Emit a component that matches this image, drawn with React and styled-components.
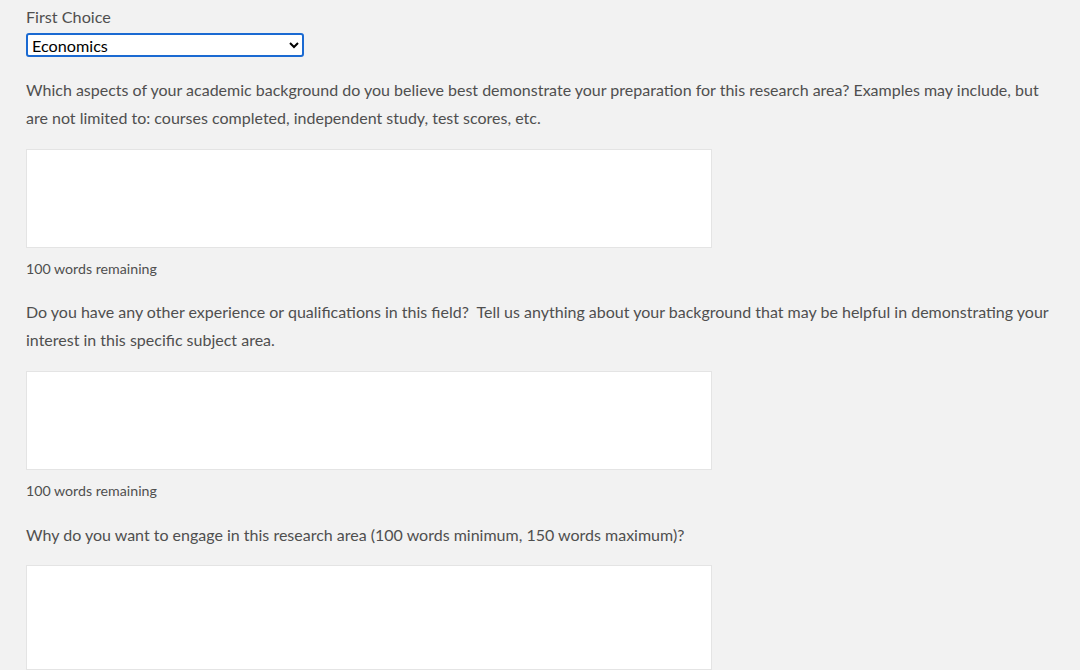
import React from "react";
import styled, { createGlobalStyle } from "styled-components";

const GlobalStyle = createGlobalStyle`
  html, body {
    margin: 0;
    padding: 0;
    background: #f2f2f2;
  }
  body {
    font-family: Lato, "Open Sans", sans-serif;
    color: #4f4f4f;
    overflow: hidden;
  }
`;

const Page = styled.div`
  padding: 7px 20px 0 26px;
  display: flex;
  flex-direction: column;
`;

const Label = styled.label`
  font-size: 16.2px;
  line-height: 20px;
  color: #4f4f4f;
`;

const Select = styled.select`
  margin-top: 6px;
  width: 278px;
  height: 24px;
  box-sizing: border-box;
  border: 2px solid #1b6ad2;
  border-radius: 3px;
  background: #fff;
  color: #000;
  font-family: Lato, "Open Sans", sans-serif;
  font-size: 16.2px;
  line-height: 20px;
  padding: 0;
  outline: none;
`;

const Question = styled.p`
  margin: ${(p) => p.$top}px 0 0;
  font-size: 16px;
  line-height: 28px;
  color: #4f4f4f;
`;

const Answer = styled.textarea`
  display: block;
  margin-top: ${(p) => p.$top}px;
  width: 686px;
  height: ${(p) => p.$height || 99}px;
  box-sizing: border-box;
  border: 1px solid #e4e4e4;
  background: #fff;
  resize: none;
  outline: none;
`;

const Counter = styled.div`
  margin-top: ${(p) => p.$top}px;
  font-size: 14.2px;
  line-height: 20px;
  color: #4f4f4f;
`;

export default function App() {
  return (
    <>
      <GlobalStyle />
      <Page>
        <Label htmlFor="first-choice">First Choice</Label>
        <Select id="first-choice" defaultValue="Economics">
          <option>Economics</option>
        </Select>

        <Question $top={19}>
          Which aspects of your academic background do you believe best
          demonstrate your preparation for this research area? Examples may
          include, but are not limited to: courses completed, independent
          study, test scores, etc.
        </Question>
        <Answer $top={17} />
        <Counter $top={11}>100 words remaining</Counter>

        <Question $top={19}>
          Do you have any other experience or qualifications in this field?
          &nbsp;Tell us anything about your background that may be helpful in
          demonstrating your interest in this specific subject area.
        </Question>
        <Answer $top={17} />
        <Counter $top={11}>100 words remaining</Counter>

        <Question $top={20}>
          Why do you want to engage in this research area (100 words minimum,
          150 words maximum)?
        </Question>
        <Answer $top={16} $height={105} />
      </Page>
    </>
  );
}
